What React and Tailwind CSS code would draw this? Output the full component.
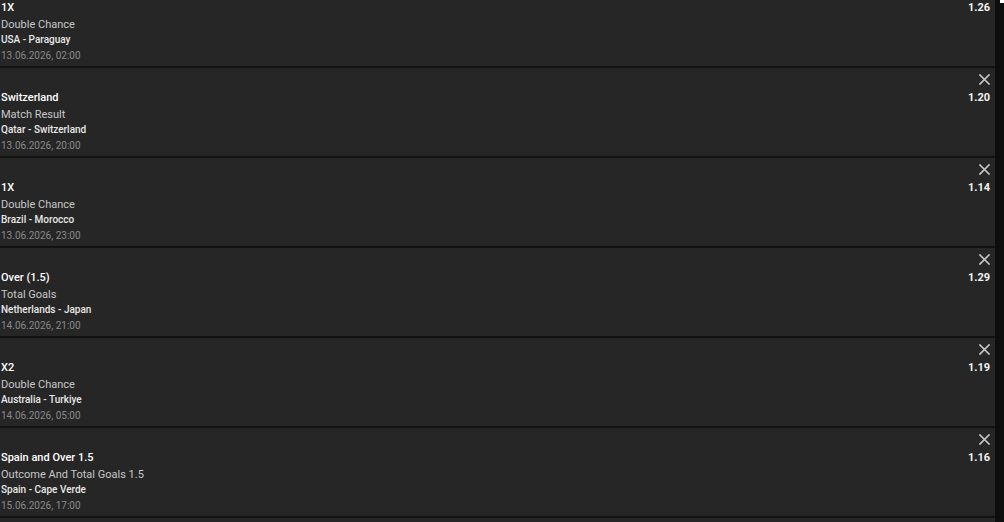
import React from "react";

const bets = [
  { sel: "1X", market: "Double Chance", teams: "USA - Paraguay", date: "13.06.2026, 02:00", odds: "1.26" },
  { sel: "Switzerland", market: "Match Result", teams: "Qatar - Switzerland", date: "13.06.2026, 20:00", odds: "1.20" },
  { sel: "1X", market: "Double Chance", teams: "Brazil - Morocco", date: "13.06.2026, 23:00", odds: "1.14" },
  { sel: "Over (1.5)", market: "Total Goals", teams: "Netherlands - Japan", date: "14.06.2026, 21:00", odds: "1.29" },
  { sel: "X2", market: "Double Chance", teams: "Australia - Turkiye", date: "14.06.2026, 05:00", odds: "1.19" },
  { sel: "Spain and Over 1.5", market: "Outcome And Total Goals 1.5", teams: "Spain - Cape Verde", date: "15.06.2026, 17:00", odds: "1.16" },
];

function Close() {
  return (
    <svg width="11" height="11" viewBox="0 0 11 11" className="block">
      <path d="M1 1 L10 10 M10 1 L1 10" stroke="#c4c4c4" strokeWidth="1.7" strokeLinecap="square" />
    </svg>
  );
}

function Card({ b }) {
  return (
    <div className="h-[90px] shrink-0 bg-[#262626] border-b-2 border-[#121212] pl-[1px] pr-[5px] flex flex-col">
      <div className="h-[21px] flex justify-end items-center pt-[2px]">
        <Close />
      </div>
      <div className="h-[18px] flex justify-between items-center">
        <span className="text-[11px] font-medium text-white">{b.sel}</span>
        <span className="text-[11px] font-bold text-[#f2f2f2]">{b.odds}</span>
      </div>
      <div className="h-[16px] flex items-center text-[11px] text-[#c8c8c8]">{b.market}</div>
      <div className="h-[12px] flex items-center text-[10px] font-medium text-[#e8e8e8]">{b.teams}</div>
      <div className="mt-[2px] h-[16px] flex items-center text-[10px] text-[#8a8a8a]">{b.date}</div>
    </div>
  );
}

export default function App() {
  return (
    <div className="w-[1004px] h-[522px] overflow-hidden bg-[#121212] flex" style={{ fontFamily: "Roboto, 'Liberation Sans', sans-serif" }}>
      <div className="w-[995px] shrink-0 -mt-[22px] h-[544px] bg-[#262626] flex flex-col">
        {bets.map((b, i) => (
          <Card key={i} b={b} />
        ))}
      </div>
      <div className="flex-1 bg-[#0e0e0e]">
        <div className="h-[3px] ml-[5px] bg-white" />
      </div>
    </div>
  );
}
